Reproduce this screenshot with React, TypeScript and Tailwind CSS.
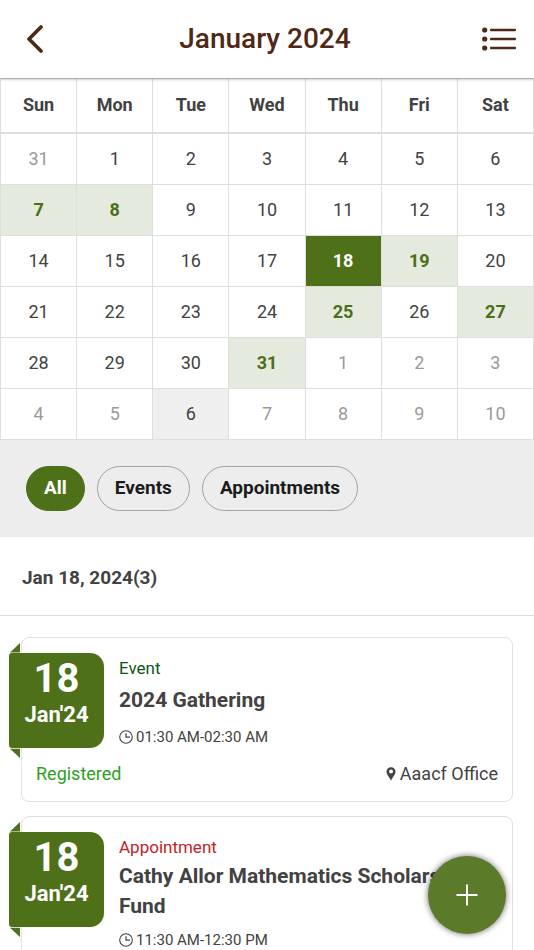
import { Fragment } from "react";

type DayKind = "normal" | "outside" | "event" | "selected" | "today";

const weekdays = ["Sun", "Mon", "Tue", "Wed", "Thu", "Fri", "Sat"];

const weeks: number[][] = [
  [31, 1, 2, 3, 4, 5, 6],
  [7, 8, 9, 10, 11, 12, 13],
  [14, 15, 16, 17, 18, 19, 20],
  [21, 22, 23, 24, 25, 26, 27],
  [28, 29, 30, 31, 1, 2, 3],
  [4, 5, 6, 7, 8, 9, 10],
];

const marked = new Set(["1-0", "1-1", "2-5", "3-4", "3-6", "4-3"]);

function kindOf(week: number, day: number): DayKind {
  const key = `${week}-${day}`;
  if (key === "2-4") return "selected";
  if (key === "5-2") return "today";
  if (marked.has(key)) return "event";
  if (key === "0-0" || week === 5 || (week === 4 && day > 3)) return "outside";
  return "normal";
}

const dayStyles: Record<DayKind, string> = {
  normal: "text-[#424242]",
  outside: "text-[#9a9a9a]",
  event: "bg-[#e4eade] font-bold text-[#4b6f17]",
  selected: "bg-[#4d7018] font-bold text-white",
  today: "bg-[#efefef] text-[#424242]",
};

function Calendar() {
  return (
    <table className="w-full table-fixed border-collapse border border-[#dedede] bg-white">
      <thead>
        <tr className="h-[54px] border-b-2 border-[#dedede]">
          {weekdays.map((name) => (
            <th key={name} scope="col" className="border-x border-[#dedede] p-0 text-lg font-bold text-[#424242]">
              {name}
            </th>
          ))}
        </tr>
      </thead>
      <tbody>
        {weeks.map((week, w) => (
          <tr key={w}>
            {week.map((day, d) => (
              <td key={d} className="border border-[#dedede] p-0">
                <button type="button" className={`block h-[50px] w-full text-lg ${dayStyles[kindOf(w, d)]}`}>
                  {day}
                </button>
              </td>
            ))}
          </tr>
        ))}
      </tbody>
    </table>
  );
}

function ClockIcon() {
  return (
    <svg viewBox="0 0 14 14" className="size-[14px] shrink-0" fill="none" stroke="currentColor" aria-hidden="true">
      <circle cx="7" cy="7" r="6.3" strokeWidth="1.1" />
      <path d="M7 3.2V7.2H11" strokeWidth="1.2" />
    </svg>
  );
}

function PinIcon() {
  return (
    <svg viewBox="0 0 10 14" className="h-[14px] w-[10px] shrink-0" fill="currentColor" aria-hidden="true">
      <path
        fillRule="evenodd"
        d="M5 0.3C2.4 0.3.5 2.2.5 4.7.5 7.5 3.2 9.6 5 13.8 6.8 9.6 9.5 7.5 9.5 4.7 9.5 2.2 7.6.3 5 .3ZM5 2.6a2 2 0 1 1 0 4 2 2 0 0 1 0-4Z"
      />
    </svg>
  );
}

function DateRibbon() {
  return (
    <div className="absolute top-[5px] -left-[13px] w-[95px] text-[#4d7018]">
      <svg viewBox="0 0 10 10" className="ml-px block size-[10px]" fill="currentColor" aria-hidden="true">
        <path d="M0 9.4 10 0V9.4Z" />
      </svg>
      <div className="flex h-[95px] flex-col items-center rounded-l-[3px] rounded-r-[14px] bg-[#4d7018] pt-1 text-white">
        <span className="text-[40px] leading-[44px] font-bold">18</span>
        <span className="text-[22px] leading-7 font-bold">Jan'24</span>
      </div>
      <svg viewBox="0 0 10 10" className="ml-px block size-[10px]" fill="currentColor" aria-hidden="true">
        <path d="M0 0.8H10V10Z" />
      </svg>
    </div>
  );
}

interface Entry {
  type: string;
  typeColor: string;
  title: string;
  time: string;
  status?: string;
  place?: string;
}

const entries: Entry[] = [
  {
    type: "Event",
    typeColor: "text-[#0f5417]",
    title: "2024 Gathering",
    time: "01:30 AM-02:30 AM",
    status: "Registered",
    place: "Aaacf Office",
  },
  {
    type: "Appointment",
    typeColor: "text-[#c02424]",
    title: "Cathy Allor Mathematics Scholarship Fund",
    time: "11:30 AM-12:30 PM",
  },
];

function EntryCard({ entry }: { entry: Entry }) {
  return (
    <article className="relative shrink-0 rounded-lg border border-[#e0e0e0] bg-white px-[14px] pt-[18px] pb-[13px]">
      <DateRibbon />
      <div className="pl-[83px]">
        <p className={`pb-0.5 text-[17px] leading-6 ${entry.typeColor}`}>{entry.type}</p>
        <h3 className="flex min-h-9 items-center text-[21px] leading-[30px] font-bold text-[#424242]">
          {entry.title}
        </h3>
        <p className="mt-[11px] flex items-center gap-[3px] text-[15px] leading-4 text-[#424242]">
          <ClockIcon />
          {entry.time}
        </p>
      </div>
      {entry.status && (
        <div className="mt-[15px] flex items-center justify-between text-lg leading-7">
          <span className="text-[#2ea01f]">{entry.status}</span>
          <span className="flex items-center gap-1 text-[#424242]">
            <PinIcon />
            {entry.place}
          </span>
        </div>
      )}
    </article>
  );
}

const filters = ["All", "Events", "Appointments"];

export default function App() {
  return (
    <div className="flex h-screen flex-col overflow-hidden bg-white font-[Roboto,sans-serif]">
      <header className="relative z-10 flex h-[78px] shrink-0 items-center justify-between bg-white pr-[18px] pl-[26px] text-[#4f2915] shadow-[0_1px_3px_rgba(0,0,0,0.35)]">
        <button type="button" aria-label="Back" className="flex w-[22px]">
          <svg viewBox="0 0 18 28" className="h-7 w-[18px]" fill="none" stroke="currentColor" strokeWidth="3.7" strokeLinecap="round" strokeLinejoin="round" aria-hidden="true">
            <path d="M15 2 3 14 15 26" />
          </svg>
        </button>
        <h1 className="text-[28px] leading-9 font-medium">January 2024</h1>
        <button type="button" aria-label="List view">
          <svg viewBox="0 0 34 24" className="h-6 w-[34px]" fill="currentColor" aria-hidden="true">
            {[3, 12, 21].map((y) => (
              <Fragment key={y}>
                <circle cx="2.7" cy={y} r="2.6" />
                <rect x="8" y={y - 1.3} width="26" height="2.6" rx="1" />
              </Fragment>
            ))}
          </svg>
        </button>
      </header>

      <Calendar />

      <nav aria-label="Filter" className="flex shrink-0 gap-3 bg-[#ededed] px-[26px] py-[26px]">
        {filters.map((name, i) => (
          <button
            key={name}
            type="button"
            className={`h-[45px] rounded-full border px-[17px] text-[19px] font-bold ${
              i === 0 ? "border-[#4d7018] bg-[#4d7018] text-white" : "border-[#a3a3a3] text-[#1c1c1c]"
            }`}
          >
            {name}
          </button>
        ))}
      </nav>

      <h2 className="shrink-0 border-b border-[#dedede] px-[22px] pt-[26px] pb-[22px] text-[19px] leading-[30px] font-bold text-[#424242]">
        Jan 18, 2024(3)
      </h2>

      <main className="flex min-h-0 flex-1 flex-col gap-[14px] overflow-y-auto px-[21px] pt-[21px] [scrollbar-width:none]">
        {entries.map((entry) => (
          <EntryCard key={entry.title} entry={entry} />
        ))}
      </main>

      <button
        type="button"
        aria-label="Add"
        className="fixed right-7 bottom-4 flex size-[78px] items-center justify-center rounded-full bg-[#5c7b2a] text-white shadow-[0_0_6px_rgba(0,0,0,0.6)]"
      >
        <svg viewBox="0 0 22 22" className="size-[22px]" stroke="currentColor" strokeWidth="2" aria-hidden="true">
          <path d="M11 0.5V21.5M0.5 11H21.5" />
        </svg>
      </button>
    </div>
  );
}
